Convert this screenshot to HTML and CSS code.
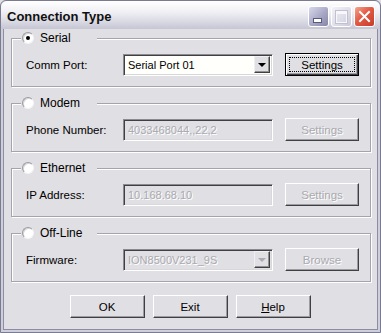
FILE: index.html
```html
<!DOCTYPE html>
<html lang="en">
<head>
  <meta charset="UTF-8">
  <title>Connection Type</title>
  <link rel="stylesheet" href="styles.css">
</head>
<body>
  <div class="window">
    <div class="titlebar">
      <span class="title">Connection Type</span>
      <div class="caption-buttons">
        <span class="cbtn min"><span class="min-glyph"></span></span>
        <span class="cbtn max"><span class="max-glyph"></span></span>
        <span class="cbtn close">
          <svg width="13" height="13" viewBox="0 0 13 13">
            <path d="M2 2 L11 11 M11 2 L2 11" stroke="#fff" stroke-width="2" stroke-linecap="square"/>
          </svg>
        </span>
      </div>
    </div>

    <div class="client">
      <fieldset class="group">
        <legend><span class="radio checked"></span>Serial</legend>
        <div class="row">
          <label>Comm Port:</label>
          <div class="combo">
            <span class="combo-text">Serial Port 01</span>
            <span class="combo-btn"><span class="arrow"></span></span>
          </div>
          <button class="btn default">Settings</button>
        </div>
      </fieldset>

      <fieldset class="group">
        <legend><span class="radio"></span>Modem</legend>
        <div class="row">
          <label>Phone Number:</label>
          <div class="field disabled">4033468044,,22,2</div>
          <button class="btn" disabled>Settings</button>
        </div>
      </fieldset>

      <fieldset class="group">
        <legend><span class="radio"></span>Ethernet</legend>
        <div class="row">
          <label>IP Address:</label>
          <div class="field disabled">10.168.68.10</div>
          <button class="btn" disabled>Settings</button>
        </div>
      </fieldset>

      <fieldset class="group">
        <legend><span class="radio"></span>Off-Line</legend>
        <div class="row">
          <label>Firmware:</label>
          <div class="combo disabled">
            <span class="combo-text">ION8500V231_9S</span>
            <span class="combo-btn"><span class="arrow"></span></span>
          </div>
          <button class="btn" disabled>Browse</button>
        </div>
      </fieldset>

      <div class="actions">
        <button class="btn">OK</button>
        <button class="btn">Exit</button>
        <button class="btn"><u>H</u>elp</button>
      </div>
    </div>
  </div>
</body>
</html>
```

FILE: styles.css
```css
body {
  margin: 0;
  padding: 0;
  background-color: #e0dfe3;
  font-family: "Liberation Sans", Arial, sans-serif;
  font-size: 11px;
  color: #000;
}

.window {
  width: 381px;
  height: 333px;
  box-sizing: border-box;
  border: 1px solid #7a7a90;
  border-radius: 6px 6px 0 0;
  padding: 0 2px 2px 2px;
  background-color: #cfcfdc;
  display: flex;
  flex-direction: column;
}

.titlebar {
  height: 28px;
  margin: 0 -2px;
  padding: 0 5px 0 6px;
  display: flex;
  align-items: center;
  justify-content: space-between;
  border-radius: 6px 6px 0 0;
  background: linear-gradient(#ffffff 0%, #f2f2f6 35%, #dcdce6 70%, #c6c6d4 100%);
}

.title {
  font-weight: bold;
  font-size: 13px;
  color: #111;
  margin-top: 2px;
}

.caption-buttons {
  display: flex;
  gap: 2px;
  margin-top: 3px;
}

.cbtn {
  width: 21px;
  height: 21px;
  box-sizing: border-box;
  border: 1px solid #fff;
  border-radius: 3px;
  display: flex;
  align-items: center;
  justify-content: center;
  position: relative;
}

.cbtn.min {
  background: linear-gradient(135deg, #d8d8ea 0%, #a8a8c6 55%, #8686a8 100%);
}

.min-glyph {
  position: absolute;
  left: 5px;
  bottom: 4px;
  width: 7px;
  height: 3px;
  background-color: #fff;
  box-shadow: 0 0 0 1px #5a5a7a;
}

.cbtn.max {
  background: linear-gradient(135deg, #f2f2f8 0%, #dcdce8 60%, #c8c8d8 100%);
}

.max-glyph {
  width: 9px;
  height: 8px;
  border: 1px solid #f8f8fc;
  border-top-width: 3px;
  box-shadow: 0 0 0 1px #c0c0d0;
}

.cbtn.close {
  background: linear-gradient(135deg, #f4a48c 0%, #e25a44 45%, #c63c2a 100%);
}

.client {
  flex: 1;
  border: 1px solid #8c8ca4;
  border-top: none;
  background-color: #e0dfe3;
  padding-top: 2px;
  display: flex;
  flex-direction: column;
  gap: 9px;
}

.group {
  margin: 0 6px 0 7px;
  padding: 0;
  border: 1px solid #a4a4b0;
  box-shadow: inset 1px 1px 0 #fff, 1px 1px 0 #fff;
  min-width: 0;
}

.group legend {
  width: 76px;
  height: 14px;
  box-sizing: border-box;
  margin-left: 9px;
  padding: 0 0 0 1px;
  background-color: #e0dfe3;
  display: flex;
  align-items: center;
  gap: 6px;
  font-size: 12px;
}

.radio {
  width: 12px;
  height: 12px;
  box-sizing: border-box;
  border-radius: 50%;
  border: 1px solid;
  border-color: #9a9aa0 #f4f4f4 #f4f4f4 #9a9aa0;
  background-color: #fff;
  box-shadow: inset 1px 1px 0 #d6d6da;
  display: flex;
  align-items: center;
  justify-content: center;
}

.radio.checked::after {
  content: "";
  width: 4px;
  height: 4px;
  border-radius: 50%;
  background-color: #000;
}

.row {
  display: grid;
  grid-template-columns: 97px 150px 74px;
  align-items: center;
  padding-left: 14px;
  margin: 8px 0 10px 0;
  height: 23px;
}

.row label {
  font-size: 11.5px;
}

.row .btn {
  margin-left: 12px;
}

.combo, .field {
  height: 22px;
  box-sizing: border-box;
  border: 1px solid;
  border-color: #8a8a90 #fff #fff #8a8a90;
  box-shadow: inset 1px 1px 0 #404040, inset -1px -1px 0 #d8d8dc;
  background-color: #fffffb;
  display: flex;
  align-items: center;
  padding: 0 2px 0 4px;
  white-space: nowrap;
  overflow: hidden;
}

.combo {
  justify-content: space-between;
}

.combo-btn {
  width: 16px;
  height: 17px;
  box-sizing: border-box;
  border: 1px solid;
  border-color: #f0f0f0 #404040 #404040 #f0f0f0;
  box-shadow: inset -1px -1px 0 #909090;
  background-color: #e0dfe3;
  display: flex;
  align-items: center;
  justify-content: center;
}

.arrow {
  width: 0;
  height: 0;
  border-left: 4px solid transparent;
  border-right: 4px solid transparent;
  border-top: 4px solid #000;
}

.disabled {
  background-color: #e0dfe3;
  color: #aaaab0;
  text-shadow: 1px 1px 0 #fff;
}

.combo.disabled .arrow {
  border-top-color: #aaaab0;
}

.btn {
  height: 23px;
  width: 74px;
  box-sizing: border-box;
  font-family: inherit;
  font-size: 11.5px;
  color: #000;
  background-color: #e0dfe3;
  border: 1px solid;
  border-color: #fff #404040 #404040 #fff;
  box-shadow: inset -1px -1px 0 #9c9ca4;
  padding: 0;
}

.btn:disabled {
  color: #aaaab0;
  text-shadow: 1px 1px 0 #fff;
}

.btn.default {
  border: 1px solid #000;
  box-shadow: inset 1px 1px 0 #fff, inset -1px -1px 0 #404040, inset -2px -2px 0 #9c9ca4;
  position: relative;
}

.btn.default::after {
  content: "";
  position: absolute;
  inset: 3px;
  border: 1px dotted #000;
}

.actions {
  display: flex;
  justify-content: center;
  gap: 8px;
  margin-top: 4px;
  padding-right: 1px;
}

.actions .btn {
  width: 75px;
}
```
